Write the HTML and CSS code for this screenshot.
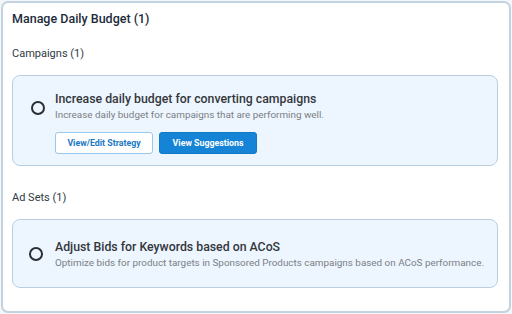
FILE: index.html
```html
<!DOCTYPE html>
<html lang="en">
<head>
  <meta charset="UTF-8" />
  <title>Manage Daily Budget</title>
  <link rel="stylesheet" href="styles.css">
</head>
<body>
  <div class="panel">
    <h2 class="panel-title">Manage Daily Budget (1)</h2>

    <div class="group-label">Campaigns (1)</div>
    <div class="rec-card">
      <span class="radio"></span>
      <div class="rec-body">
        <div class="rec-title">Increase daily budget for converting campaigns</div>
        <div class="rec-desc">Increase daily budget for campaigns that are performing well.</div>
        <div class="actions">
          <button class="btn btn-outline">View/Edit Strategy</button>
          <button class="btn btn-primary">View Suggestions</button>
        </div>
      </div>
    </div>

    <div class="group-label ad-sets">Ad Sets (1)</div>
    <div class="rec-card rec-card-small">
      <span class="radio"></span>
      <div class="rec-body">
        <div class="rec-title">Adjust Bids for Keywords based on ACoS</div>
        <div class="rec-desc">Optimize bids for product targets in Sponsored Products campaigns based on ACoS performance.</div>
      </div>
    </div>
  </div>
</body>
</html>
```

FILE: styles.css
```css
body {
  font-family: Roboto, "Noto Sans", Arial, sans-serif;
  background-color: #f4f7fa;
  margin: 0;
  padding: 1px;
}

.panel {
  box-sizing: border-box;
  width: 510px;
  height: 312px;
  background-color: white;
  border: 2px solid #c3d3df;
  border-radius: 7px;
  padding: 6px 11px 0 9px;
}

.panel-title {
  margin: 0;
  font-size: 12.5px;
  line-height: 20px;
  font-weight: 500;
  color: #1c2b3a;
}

.group-label {
  margin-top: 17px;
  font-size: 11px;
  line-height: 16px;
  color: #2f3a44;
}

.group-label.ad-sets {
  margin-top: 24px;
}

.rec-card {
  display: flex;
  align-items: flex-start;
  margin-top: 13px;
  background-color: #edf5fe;
  border: 1px solid #b9cfe1;
  border-radius: 8px;
  padding: 15px 12px 0 18px;
  height: 91px;
  box-sizing: border-box;
}

.rec-card-small {
  height: 69px;
  margin-top: 13px;
  align-items: center;
  padding: 0 12px 0 16px;
}

.rec-card-small .rec-body {
  margin-top: 3px;
}

.radio {
  flex: none;
  width: 10px;
  height: 10px;
  border: 2px solid #2b2f33;
  border-radius: 50%;
  margin-top: 10px;
  margin-right: 10px;
}

.rec-card-small .radio {
  margin-top: 0;
  margin-right: 12px;
}

.rec-title {
  font-size: 12.3px;
  line-height: 16px;
  font-weight: 500;
  color: #33373b;
}

.rec-desc {
  font-size: 9.9px;
  line-height: 16px;
  color: #7a7f85;
}

.actions {
  display: flex;
  gap: 6px;
  margin-top: 9px;
}

.btn {
  width: 98px;
  height: 22px;
  border-radius: 3px;
  font-family: inherit;
  font-size: 8.8px;
  font-weight: 700;
  padding: 0;
  cursor: pointer;
}

.btn-outline {
  background-color: white;
  border: 1px solid #9cc6ea;
  color: #1b78c4;
}

.btn-primary {
  background-color: #1583d6;
  border: 1px solid #1279c4;
  color: white;
}
```
